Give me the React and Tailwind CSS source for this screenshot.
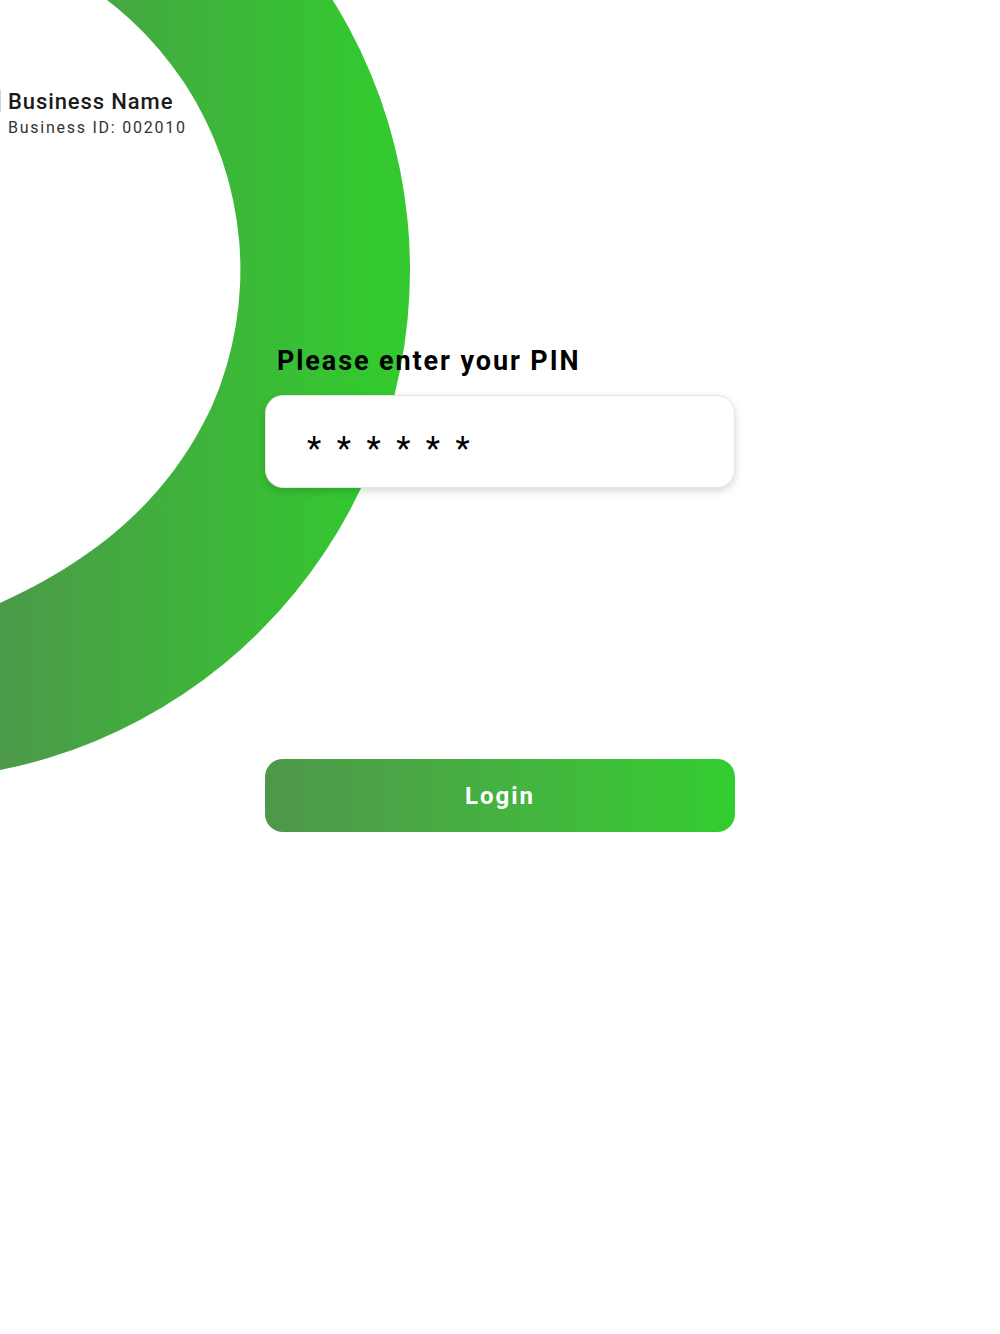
const Ring = () => (
  <svg
    className="absolute left-0 top-0 pointer-events-none"
    width="420"
    height="800"
    viewBox="0 0 420 800"
  >
    <defs>
      <linearGradient id="ringFill" gradientUnits="userSpaceOnUse" x1="0" y1="0" x2="370" y2="0">
        <stop offset="0" stopColor="#4c9a49" />
        <stop offset="1" stopColor="#33c92f" />
      </linearGradient>
    </defs>
    <path
      fillRule="evenodd"
      fill="url(#ringFill)"
      d="M -100 -240 A 510 510 0 1 1 -100 780 A 510 510 0 1 1 -100 -240 Z
         M -100 -70 A 340 340 0 0 1 212 406 C 182 470 128 545 0 603 L -100 610 Z"
    />
  </svg>
);

export default function App() {
  return (
    <div
      className="relative w-full min-h-[1334px] bg-white overflow-hidden"
      style={{ fontFamily: 'Roboto, "Noto Sans", sans-serif' }}
    >
      <Ring />

      {/* faint edge of the cut-off logo */}
      <div className="absolute left-0 top-[90px] w-[1px] h-[22px] bg-gray-300" />

      <div className="relative pt-[88px] pl-2">
        <h2 className="text-[22px] leading-[27px] font-medium tracking-[0.9px] text-[#1b1b1b]">Business Name</h2>
        <p className="mt-[3px] text-[16px] leading-[20px] tracking-[1.75px] text-[#333]">Business ID: 002010</p>
      </div>

      <div className="relative mx-auto w-[470px] mt-[208px]">
        <p className="pl-3 text-[27px] leading-[30px] font-bold tracking-[1.9px] text-black">
          Please enter your PIN
        </p>
        <div className="mt-[19px] h-[93px] rounded-[18px] bg-white border border-[#e6e6e6] shadow-[0_3px_8px_rgba(0,0,0,0.16)] flex items-center pl-[41px]">
          <span className="text-[33px] leading-none tracking-[15.5px] text-black pt-[14px]">******</span>
        </div>

        <button className="mt-[271px] w-full h-[73px] rounded-[18px] bg-gradient-to-r from-[#4e974a] to-[#32cd2e] text-white text-[24px] font-bold tracking-[2px]">
          Login
        </button>
      </div>
    </div>
  );
}
